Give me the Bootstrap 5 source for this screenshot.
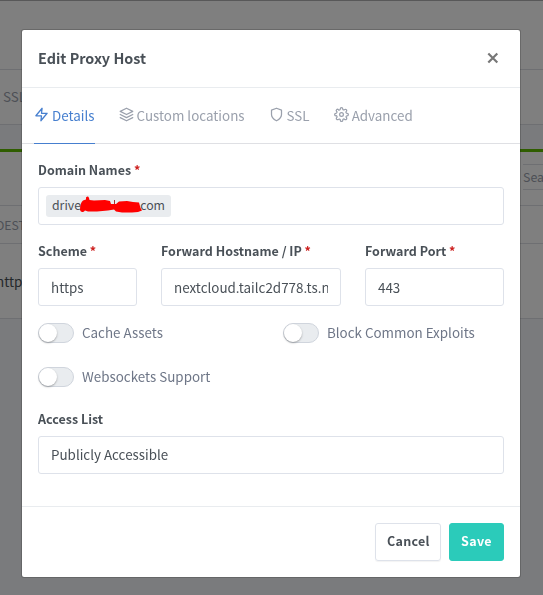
<!DOCTYPE html>
<html lang="en">
<head>
<meta charset="utf-8">
<meta name="viewport" content="width=device-width, initial-scale=1">
<title>Edit Proxy Host</title>
<link href="https://cdn.jsdelivr.net/npm/bootstrap@5.3.0/dist/css/bootstrap.min.css" rel="stylesheet">
<style>
body { font-family: "Noto Sans CJK SC", "Open Sans", sans-serif; font-size: 13.4px; line-height: 20px; color: #495057; background: #f5f7fb; overflow: hidden; }
/* page behind the dialog */
.page-head { height: 70px; background: #fff; border-top: 1px solid #b0b0b2; border-bottom: 1px solid #dcdfe4; }
.page-nav { height: 55px; background: #fff; border-bottom: 1px solid #dcdfe4; color: #9aa0ac; padding: 0 0 2px 3px; }
.hosts-panel { margin-top: 24px; height: 170px; border-top: 3px solid #5eba00; border-bottom: 1px solid #dcdfe4; background: #fff; }
.hosts-tools { height: 54px; border-bottom: 1px solid #dcdfe4; padding-top: 12px; }
.hosts-search { width: 20px; height: 26px; border: solid #dcdfe4; border-width: 1px 0; font-size: 12.4px; color: #9aa0ac; line-height: 25px; white-space: nowrap; overflow: hidden; }
.hosts-cols { height: 38px; border-bottom: 1px solid #dcdfe4; color: #9aa0ac; font-size: 12.1px; }
.hosts-row { height: 74px; }
.hosts-cut { margin-left: -4px; }
/* dialog */
.modal-dialog { width: 500px; max-width: 500px; margin: 29px 0 0 21px; }
.modal-content { border-radius: 3px; height: 549px; color: #495057; }
.modal-header { height: 58px; padding: 0 17px 2px 16px; border-color: #e9ecef; flex: none; }
.modal-title { font-size: 14.4px; font-weight: 700; }
.host-tabs { height: 56px; padding-left: 12px; gap: 24px; border-bottom: 1px solid #dfe0e4; font-size: 13.4px; flex: none; }
.host-tabs .nav-link { display: flex; align-items: center; gap: 3px; padding: 0 0 2px; height: 56px; color: #9aa0ac; border: 0; border-bottom: 1px solid transparent; }
.host-tabs .nav-link.active { color: #467fcf; border-bottom-color: #467fcf; background: none; }
.fe { width: 15px; height: 15px; fill: none; stroke: currentColor; stroke-width: 2; stroke-linecap: round; stroke-linejoin: round; flex: none; }
.modal-body { padding: 16px 16px 0; }
.form-label { display: block; font-size: 12.5px; font-weight: 700; margin-bottom: 7px; white-space: nowrap; }
.req { color: #cd201f; }
.form-control { height: 38px; padding: 0 12px; font-family: inherit; font-size: 13.4px; line-height: 36px; color: #495057; border: 1px solid #dee2ea; border-radius: 3px; overflow: hidden; white-space: nowrap; }
.access-value { line-height: 35px; }
.domain-box { padding: 7px; }
.domain-tag { height: 22px; width: 125px; line-height: 21px; padding: 0 6px; background: #e9ecef; border-radius: 3px; font-size: 12.3px; color: #495057; }
.scribble { left: 34px; top: 1px; width: 62px; height: 17px; }
.host-fields { display: grid; grid-template-columns: 99px 180px 139px; gap: 24px; margin: 16px 0 17px; }
.switches { display: grid; grid-template-columns: 245px 1fr; row-gap: 24px; margin-bottom: 22px; color: #6e7687; }
.switches span { line-height: 18px; padding-bottom: 2px; }
.toggle { width: 36px; height: 20px; border: 1px solid #d0d5dd; border-radius: 10px; background: #e9ecef; }
.toggle-knob { width: 18px; height: 18px; border-radius: 50%; background: #fff; box-shadow: 0 1px 2px rgba(0,0,0,.3); }
.modal-footer { height: 71px; padding: 0 16px; gap: 8px; border-color: #e9ecef; flex: none; }
.modal-footer .btn { height: 38px; margin: 0; padding: 0 11px 1px; font-size: 12.5px; font-weight: 700; border-radius: 3px; letter-spacing: .3px; }
.btn-cancel { width: 66px; border: 1px solid #dee2ea; color: #495057; box-shadow: 0 1px 1px rgba(0,0,0,.05); }
.btn-save { width: 55px; background: #2bcbba; border-color: #2bcbba; color: #fff; }
</style>
<script src="https://cdn.jsdelivr.net/npm/bootstrap@5.3.0/dist/js/bootstrap.bundle.min.js"></script>
</head>
<body>
<div aria-hidden="true">
  <div class="page-head"></div>
  <div class="page-nav d-flex align-items-center">SSL</div>
  <div class="hosts-panel">
    <div class="hosts-tools d-flex justify-content-end"><div class="hosts-search">Search</div></div>
    <div class="hosts-cols d-flex align-items-center"><span class="hosts-cut">DEST</span></div>
    <div class="hosts-row d-flex align-items-center"><span class="hosts-cut">https</span></div>
  </div>
</div>
<div class="modal-backdrop show"></div>
<div class="modal d-block overflow-hidden" tabindex="-1" role="dialog">
  <div class="modal-dialog">
    <div class="modal-content">
      <div class="modal-header">
        <div class="modal-title">Edit Proxy Host</div>
        <svg width="12" height="12" viewBox="0 0 12 12" class="me-1" stroke="#777" stroke-width="2.200" role="button" aria-label="Close"><path d="M1.300 1.500l9 9M10.300 1.500l-9 9"/></svg>
      </div>
      <div class="nav host-tabs">
        <a class="nav-link active"><svg class="fe" viewBox="0 0 24 24"><path d="M13 2L3 14h9l-1 8 10-12h-9z"/></svg>Details</a>
        <a class="nav-link"><svg class="fe" viewBox="0 0 24 24"><path d="M12 2L2 7l10 5 10-5zM2 17l10 5 10-5M2 12l10 5 10-5"/></svg>Custom locations</a>
        <a class="nav-link"><svg class="fe" viewBox="0 0 24 24"><path d="M12 22s8-4 8-10V5l-8-3-8 3v7c0 6 8 10 8 10z"/></svg>SSL</a>
        <a class="nav-link"><svg class="fe" viewBox="0 0 24 24"><circle cx="12" cy="12" r="3"/><path d="M19.4 15a1.65 1.65 0 0 0 .33 1.82l.06.06a2 2 0 1 1-2.83 2.83l-.06-.06a1.65 1.65 0 0 0-2.82 1.17V21a2 2 0 0 1-4 0v-.09A1.65 1.65 0 0 0 9 19.4a1.65 1.65 0 0 0-1.82.33l-.06.06a2 2 0 1 1-2.83-2.83l.06-.06A1.65 1.65 0 0 0 3.17 14H3a2 2 0 0 1 0-4h.09A1.65 1.65 0 0 0 4.6 9a1.65 1.65 0 0 0-.33-1.82l-.06-.06a2 2 0 1 1 2.83-2.83l.06.06A1.65 1.65 0 0 0 10 3.17V3a2 2 0 0 1 4 0v.09a1.65 1.65 0 0 0 2.82 1.17l.06-.06a2 2 0 1 1 2.83 2.83l-.06.06A1.65 1.65 0 0 0 20.83 10H21a2 2 0 0 1 0 4h-.09a1.65 1.65 0 0 0-1.51 1z"/></svg>Advanced</a>
      </div>
      <div class="modal-body">
        <label class="form-label">Domain Names <span class="req">*</span></label>
        <div class="form-control domain-box">
          <div class="domain-tag d-flex justify-content-between position-relative"><span>drive</span><span>.com</span>
            <svg class="scribble position-absolute" viewBox="0 0 62 17" fill="#f00"><path d="M0 14Q0 7 3 4.500L6 3.500V1.500Q8-.5 9 2L9.500 4 14 4.500 25 4 30 5 31 8 36 8 39 5.500 47 5 53 6 59 6.500 60.500 12 62 14.500 58 16 52 16.500 42 16.500 36 15.500 34 13.500 28 14.500 17 15.500 8 15.500 5 14.500 4 15.500Q1 17 0 14z"/><path d="M34.500 4v4" stroke="#a33" stroke-width="1"/></svg>
          </div>
        </div>
        <div class="host-fields">
          <div><label class="form-label">Scheme <span class="req">*</span></label><div class="form-control">https</div></div>
          <div><label class="form-label">Forward Hostname / IP <span class="req">*</span></label><input class="form-control" value="nextcloud.tailc2d778.ts.net"></div>
          <div><label class="form-label">Forward Port <span class="req">*</span></label><input class="form-control" value="443"></div>
        </div>
        <div class="switches">
          <div class="d-flex align-items-center gap-2"><div class="toggle"><div class="toggle-knob"></div></div><span>Cache Assets</span></div>
          <div class="d-flex align-items-center gap-2"><div class="toggle"><div class="toggle-knob"></div></div><span>Block Common Exploits</span></div>
          <div class="d-flex align-items-center gap-2"><div class="toggle"><div class="toggle-knob"></div></div><span>Websockets Support</span></div>
        </div>
        <label class="form-label">Access List</label>
        <div class="form-control access-value">Publicly Accessible</div>
      </div>
      <div class="modal-footer">
        <button class="btn btn-cancel">Cancel</button>
        <button class="btn btn-save">Save</button>
      </div>
    </div>
  </div>
</div>
</body>
</html>
